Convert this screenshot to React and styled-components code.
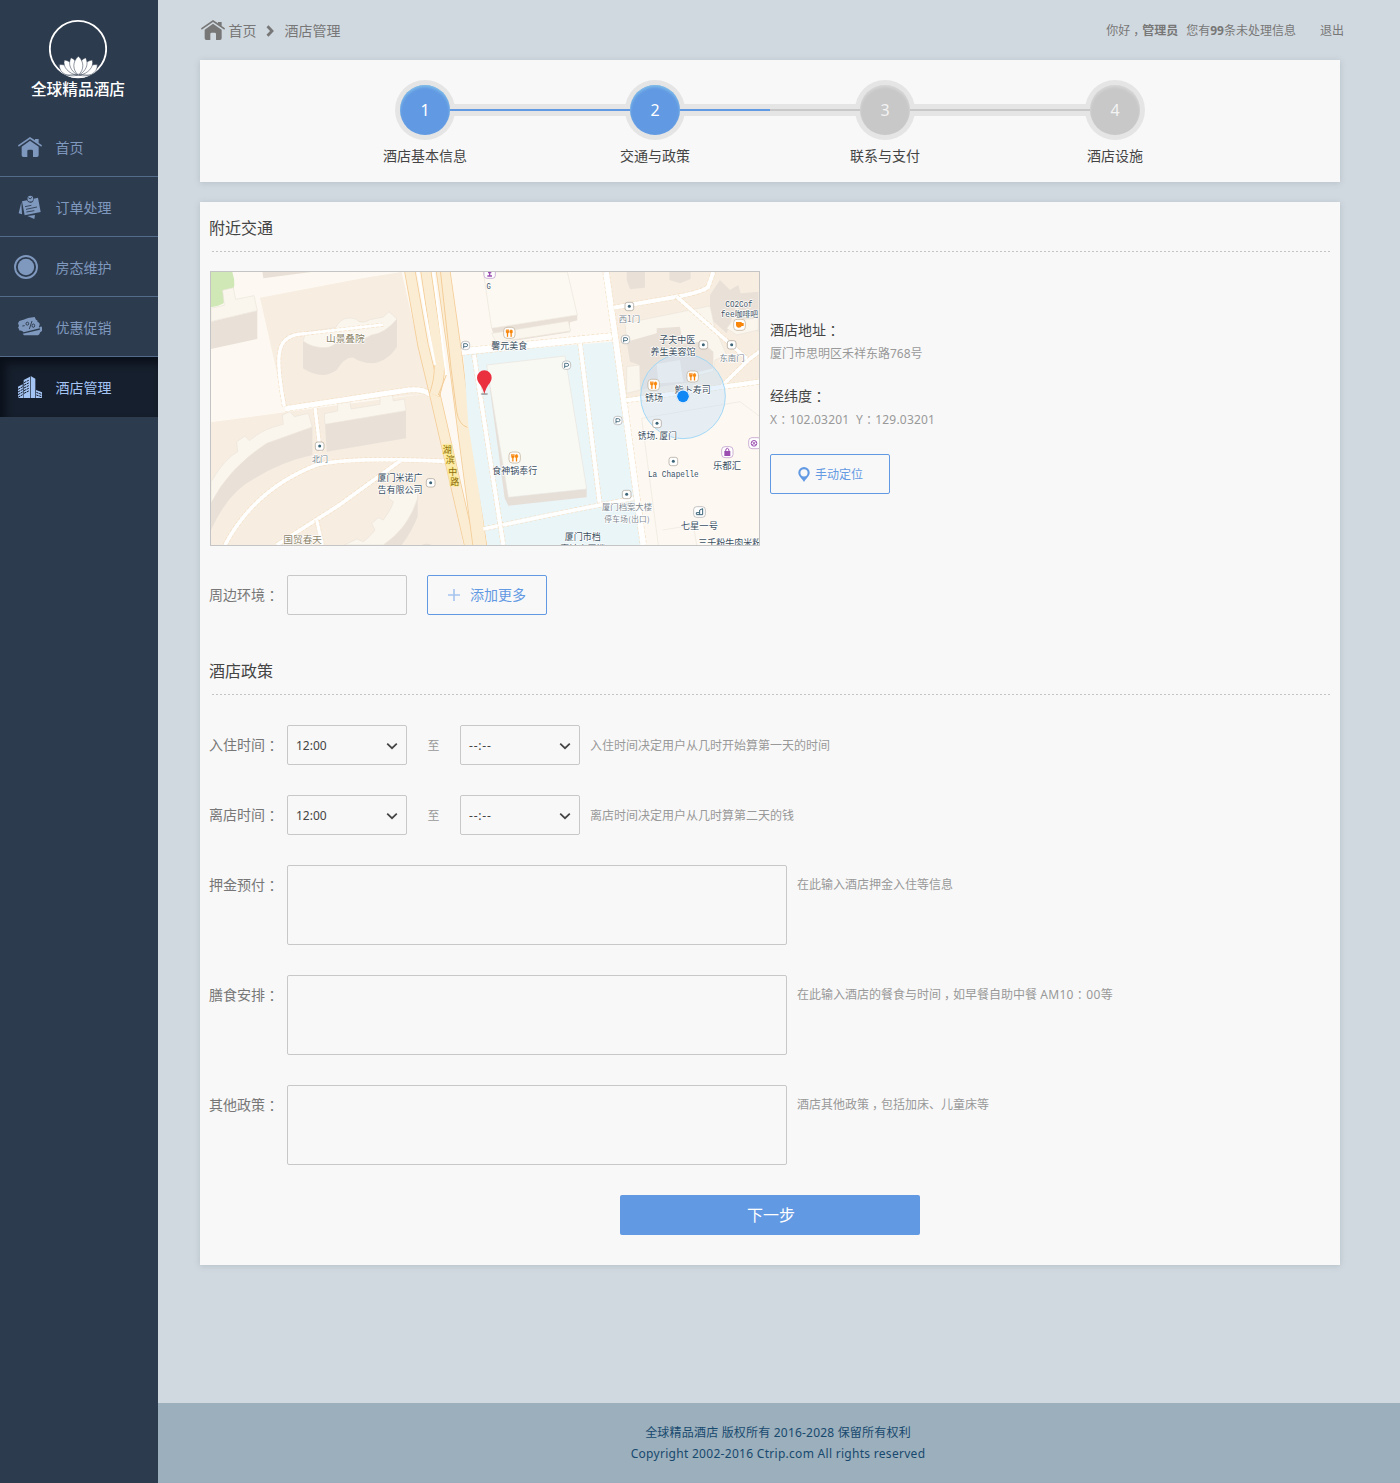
import React from "react";
import styled, { createGlobalStyle, css } from "styled-components";

const sans = '"Noto Sans", "Noto Sans CJK SC", sans-serif';
const blue = "#6299e3";

const GlobalStyle = createGlobalStyle`
  * { box-sizing: border-box; }
  body { margin: 0; background: #d1d9e0; font-family: ${sans}; font-size: 14px; color: #777; }
  input, textarea, button { font: inherit; margin: 0; outline: none; }
`;

/* ---------- page frame ---------- */
const Page = styled.div`
  display: flex;
  min-height: 1483px;
`;
const Sidebar = styled.aside`
  width: 158px;
  flex: none;
  background: #2d3b4e;
`;
const Main = styled.div`
  flex: 1;
  min-width: 0;
  display: flex;
  flex-direction: column;
`;
const Content = styled.main`
  flex: 1;
  padding: 0 60px 0 42px;
`;

/* ---------- sidebar ---------- */
const Brand = styled.div`
  height: 117px;
  padding-top: 19px;
  display: flex;
  flex-direction: column;
  align-items: center;
  svg { display: block; margin-right: 2px; }
`;
const BrandName = styled.div`
  margin: -1px 2px 0 0;
  color: #fff;
  font-size: 15.7px;
  font-weight: 500;
  line-height: 22px;
  white-space: nowrap;
`;
const NavItem = styled.a`
  display: flex;
  align-items: center;
  height: 60px;
  padding-left: ${(p) => p.$inset || 18}px;
  border-bottom: 1px solid #536c8c;
  color: #7f98bd;
  line-height: 20px;
  svg { flex: none; display: block; }
  span { margin: 2px 0 0 ${(p) => 31.5 - (p.$inset || 18)}px; }
  ${(p) =>
    p.$active &&
    css`
      border-bottom: 0;
      background: #161f2d;
      color: #a4c4f3;
      box-shadow: inset 5px 6px 9px rgba(4, 8, 14, 0.65);
    `}
`;
const IconSlot = styled.i`
  display: flex;
  width: 24px;
  justify-content: center;
`;

/* ---------- top bar ---------- */
const TopBar = styled.header`
  display: flex;
  justify-content: space-between;
  height: 60px;
  margin-right: -4px;
  line-height: 22px;
  color: #777;
`;
const Crumbs = styled.nav`
  display: flex;
  align-items: center;
  padding-left: 1px;
  svg { display: block; }
  > svg { margin-bottom: 2px; }
`;
const Crumb = styled.span`
  margin: 1px 0 0 ${(p) => p.$gap}px;
`;
const Account = styled.div`
  display: flex;
  align-items: center;
  font-size: 12px;
  padding-top: 1px;
  span + span { margin-left: ${(p) => p.$gap}px; }
`;
const Exit = styled.a`
  margin-left: 24px;
`;
const Mark = styled.i`
  font-style: normal;
  font-family: "Noto Sans CJK TC", sans-serif;
  line-height: 0;
  vertical-align: -1px;
`;
const Comma = styled.i`
  font-style: normal;
  font-feature-settings: "halt";
  padding: 0 0.25em;
`;

/* ---------- cards ---------- */
const Card = styled.section`
  background: #f8f8f8;
  box-shadow: 0 1px 6px rgba(90, 115, 115, 0.24);
`;
const StepsCard = styled(Card)`
  height: 122px;
  padding-top: 25px;
  display: flex;
  justify-content: center;
`;
const Step = styled.div`
  width: 230px;
  display: flex;
  flex-direction: column;
  align-items: center;
`;
const StepTrack = styled.div`
  display: flex;
  align-items: center;
`;
const Rail = styled.span`
  position: relative;
  z-index: 1;
  width: 90px;
  height: 12px;
  padding: 5px 0;
  background: ${(p) => (p.$hidden ? "transparent" : "#e5e5e5")};
  &::before {
    content: "";
    display: block;
    height: 2px;
    background: ${(p) => (p.$hidden ? "transparent" : p.$done ? blue : "#c8c8c8")};
  }
`;
const StepDot = styled.span`
  width: 50px;
  height: 50px;
  border-radius: 50%;
  background: ${(p) => (p.$done ? blue : "#c8c8c8")};
  box-shadow: 0 0 0 5px #e5e5e5, inset 0 2px 3px ${(p) => (p.$done ? "rgba(140, 205, 235, .7)" : "rgba(225, 225, 225, .6)")};
  color: ${(p) => (p.$done ? "#fff" : "#f3f3f3")};
  font-size: 16px;
  line-height: 50px;
  text-align: center;
`;
const StepLabel = styled.span`
  margin-top: 11px;
  line-height: 20px;
  color: #444;
`;
const FormCard = styled(Card)`
  margin-top: 20px;
  height: 1063px;
  padding: 0 10px 0 9px;
`;
const SectionTitle = styled.h2`
  margin: ${(p) => p.$top || 0}px 0 0;
  height: 50px;
  padding-top: 14px;
  font-size: 16px;
  font-weight: 400;
  line-height: 24px;
  color: #444;
  background: repeating-linear-gradient(90deg, #c4c4c4 0 2px, transparent 2px 4px) 3px 100% / 100% 1px no-repeat;
`;

/* ---------- location ---------- */
const Location = styled.div`
  display: flex;
  margin: 19px 0 -1px 1px;
`;
const MapFrame = styled.div`
  width: 550px;
  height: 275px;
  border: 1px solid #c4c4c4;
  svg { display: block; }
`;
const LocationInfo = styled.div`
  margin-left: 10px;
  padding-top: 48px;
`;
const InfoTitle = styled.div`
  height: 22px;
  line-height: 22px;
  color: #444;
`;
const InfoText = styled.div`
  margin: 2px 0 ${(p) => p.$bottom}px;
  height: 22px;
  font-size: 12px;
  line-height: 22px;
  color: #999;
  white-space: pre;
  letter-spacing: ${(p) => p.$tracking || 0}px;
`;
const OutlineButton = styled.button`
  display: flex;
  align-items: center;
  width: 120px;
  height: 40px;
  padding: 0 0 0 ${(p) => p.$pad}px;
  border: 1px solid ${blue};
  border-radius: 2px;
  background: transparent;
  color: ${blue};
  font-size: ${(p) => p.$size}px;
  span { margin-left: ${(p) => p.$gap}px; }
`;

/* ---------- form ---------- */
const Row = styled.div`
  display: flex;
  margin-top: 30px;
  line-height: 40px;
`;
const Label = styled.label`
  width: 78px;
  height: 40px;
  flex: none;
`;
const field = css`
  border: 1px solid #c8c8c8;
  border-radius: 2px;
  background: transparent;
`;
const TextInput = styled.input`
  ${field}
  width: 120px;
  height: 40px;
  margin-right: 20px;
`;
const TextArea = styled.textarea`
  ${field}
  display: block;
  width: 500px;
  height: 80px;
  resize: none;
`;
const Select = styled.div`
  ${field}
  display: flex;
  justify-content: space-between;
  align-items: center;
  width: 120px;
  height: 40px;
  padding: 2px 8px 0;
  font-size: 12px;
  letter-spacing: ${(p) => (p.$empty ? 0.8 : 0)}px;
  color: #444;
`;
const To = styled.span`
  width: 53px;
  height: 40px;
  padding-top: 1px;
  text-align: center;
  font-size: 12px;
  color: #999;
`;
const Hint = styled.span`
  margin-left: 10px;
  height: 40px;
  padding-top: ${(p) => p.$drop || 0}px;
  font-size: 12px;
  color: #999;
`;
const Latin = styled.span`
  letter-spacing: 0.35px;
`;
const Submit = styled.button`
  display: block;
  width: 300px;
  height: 40px;
  margin: 30px auto 0 411px;
  padding: 0 0 2px 2px;
  border: 0;
  border-radius: 2px;
  background: ${blue};
  color: #fff;
  font-size: 16px;
`;
const Footer = styled.footer`
  height: 80px;
  padding: 19px 2px 0 0;
  background: #9bafbc;
  color: #17496e;
  font-size: 12px;
  line-height: 21px;
  text-align: center;
`;
const FooterLine = styled.div`
  letter-spacing: ${(p) => p.$tracking}px;
`;

/* ---------- icons ---------- */
const HomeIcon = ({ color }) => (
  <svg width="24" height="21" viewBox="0 -3 72 63" fill={color}>
    <path d="M0 25 36 0 51 10V6H62V18L72 25 70 29 36 6 2 29Z" />
    <path d="M11 29 36 11 62 29V55Q62 60 57 60H45V42Q45 38 41 38H32Q28 38 28 42V60H16Q11 60 11 55Z" />
  </svg>
);
const OrderIcon = () => (
  <svg width="24" height="24" viewBox="0 0 72 72">
    <g fill="#7f98bd">
      <path d="M10 22 2 55 12 58Z" />
      <path d="M12 19 27 16Q30 24 38 23 47 22 47 11L60 8 68 51 20 61Z" />
      <path d="M28 63 51 60 49 72Z" />
      <circle cx="37" cy="11" r="8.500" />
    </g>
    <g fill="none" stroke="#2d3b4e" strokeWidth="2.600">
      <path d="M21 35 40 31M24 43 57 36M25 51 49 47" />
      <path d="M31 8Q36 16 42 7" />
    </g>
  </svg>
);
const RoomIcon = () => (
  <svg width="24" height="24" viewBox="0 0 24 24">
    <circle cx="12" cy="12" r="11" fill="none" stroke="#7f98bd" strokeWidth="1.9" />
    <circle cx="12" cy="12" r="8.2" fill="#7f98bd" />
  </svg>
);
const SaleIcon = () => (
  <svg width="24" height="19" viewBox="0 0 72 57">
    <path fill="#7f98bd" d="M4 12Q20 8 30 3L50 0 54 8Q61 10 58 15 66 16 65 24 60 29 65 34L17 46Q12 40 5 41L0 31Q5 28 2 24L0 19Z" />
    <path fill="#7f98bd" d="M14 50 66 38 64 30Q72 26 72 32V42Q65 44 64 52L60 55H18Z" />
    <g fill="none" stroke="#2d3b4e" strokeWidth="2.800">
      <path d="M13 27 20 26M42 12 34 36" />
      <ellipse cx="28" cy="20" rx="4" ry="4.500" />
      <ellipse cx="46" cy="26" rx="4" ry="5" />
    </g>
  </svg>
);
const HotelIcon = () => (
  <svg width="24" height="22" viewBox="0 0 72 66">
    <g fill="#a4c4f3">
      <path d="M0 32 14 25 16 66H0Z" />
      <path d="M17 12 36 2V66H17Z" />
      <path d="M38 0 52 8V66H38Z" />
      <path d="M54 42 72 49V66H54Z" />
    </g>
    <path
      d="M0 40 14 32M0 48 14 40M0 56 14 48M0 64 14 56M18 20 34 12M18 28 34 20M18 36 34 28M18 44 34 36M18 52 34 44M55 49 70 55M55 57 70 62"
      stroke="#161f2d"
      strokeWidth="3"
      strokeDasharray="7 2"
    />
  </svg>
);
const Logo = () => (
  <svg width="58" height="60" viewBox="0 0 174 180">
    <path fill="#fff" d="M28 136 50 166H124L146 136Q130 178 87 178 44 178 28 136Z" />
    <circle cx="87" cy="90" r="84.5" fill="none" stroke="#fff" strokeWidth="5.5" />
    <g fill="#fff" stroke="#2d3b4e" strokeWidth="1.6">
      <path d="M84 169C60 174 30 166 31 137 52 134 72 150 84 169ZM92 169C116 174 146 166 145 137 124 134 104 150 92 169Z" />
      <path d="M85 169C60 164 40 145 46 123 66 126 82 142 85 169ZM91 169C116 164 136 145 130 123 110 126 94 142 91 169Z" />
      <path d="M87 169C64 156 56 134 66 116 82 122 92 142 87 169ZM89 169C112 156 120 134 110 116 94 122 84 142 89 169Z" />
      <path d="M88 169C70 152 70 128 88 112 106 128 106 152 88 169Z" />
    </g>
    <path d="M34 170Q87 161 140 170" fill="none" stroke="#2d3b4e" strokeWidth="1.3" />
  </svg>
);
const CrumbArrow = () => (
  <svg width="8" height="12" viewBox="0 0 8 12">
    <path d="M1.5 1.2 6 6 1.5 10.8" fill="none" stroke="#777" strokeWidth="2.8" />
  </svg>
);
const Caret = () => (
  <svg width="12" height="8" viewBox="0 0 12 8">
    <path d="M1.2 1.600 6 6.200 10.8 1.600" fill="none" stroke="#444" strokeWidth="1.7" />
  </svg>
);
const PinIcon = () => (
  <svg width="12" height="15" viewBox="0 0 12 15">
    <path
      fillRule="evenodd"
      fill={blue}
      d="M6 0a5.7 5.7 0 0 1 5.7 5.8C11.7 8.700 8.500 11.200 6 15 3.500 11.200.3 8.700.3 5.800A5.700 5.700 0 0 1 6 0Zm0 2.200a3.600 3.600 0 1 0 0 7.200 3.600 3.600 0 0 0 0-7.200Z"
    />
  </svg>
);
const PlusIcon = () => (
  <svg width="12" height="12" viewBox="0 0 12 12">
    <path d="M6 0V12M0 6H12" stroke="#a5c4ee" strokeWidth="1.6" />
  </svg>
);

/* ---------- map ---------- */
const MapText = styled.text`
  font-family: ${(p) => (p.$mono ? '"Liberation Mono", "Noto Sans CJK SC", monospace' : '"Noto Sans CJK SC", sans-serif')};
  font-size: ${(p) => p.$size || 27}px;
  fill: ${(p) => p.$color || "#3b4f61"};
  stroke: ${(p) => p.$halo || "#fff"};
  stroke-width: 4px;
  stroke-linejoin: round;
  paint-order: stroke;
  text-anchor: middle;
`;
const PoiBox = ({ x, y, color = "#a39a90", children }) => (
  <g transform={`translate(${x} ${y})`}>
    <rect x="-13" y="-12" width="26" height="25" rx="7" fill="#fff" stroke={color} strokeWidth="2" />
    {children}
  </g>
);
const DotPoi = (p) => (
  <PoiBox {...p}>
    <circle r="4.5" fill="#3b6478" />
  </PoiBox>
);
const ParkPoi = ({ x, y }) => (
  <g transform={`translate(${x} ${y})`}>
    <rect x="-12" y="-13" width="25" height="25" rx="9" fill="#fff" stroke="#a8a8a8" strokeWidth="2" />
    <path d="M-5 8V-6H2Q7-6 7-1.500 7 3 2 3H-5" fill="none" stroke="#3b6478" strokeWidth="2.600" />
  </g>
);
const FoodPoi = ({ x, y }) => (
  <g transform={`translate(${x} ${y})`}>
    <rect x="-17" y="-17" width="34" height="33" rx="10" fill="#fff" stroke="#b9a78e" strokeWidth="2" />
    <path d="M-10-10H-8V-5H-6.500V-10H-4.500V-5H-3V-10H-1V-3Q-1 0-4 1V11H-7V1Q-10 0-10-3Z" fill="#f8860a" stroke="#f8860a" />
    <path d="M7 11H4V1Q1 0 1-4 1-9 5-10 10-10 10-4 10 0 7 1Z" fill="#f8860a" stroke="#f8860a" />
  </g>
);
const whiteRoads = [
  ["M240 431 590 378Q650 367 675 388", 15],
  ["M238 425Q215 300 224 260 232 208 300 206", 10],
  ["M535 179 300 206", 8],
  ["M330 428 346 560", 10],
  ["M60 840Q150 670 340 598 450 575 722 589", 11],
  ["M215 840 400 722 585 588", 11],
  ["M335 765 352 840", 10],
];
const eastRoads = [
  ["M-55 260 160 238 405 213", 20],
  ["M378 21 405 210 490 840", 17],
  ["M300 235 360 722", 12],
  ["M10 792 200 752 460 700", 11],
  ["M-18 270 70 840", 12],
  ["M400 128 590 95Q665 82 684 66 690 50 700 21", 12],
  ["M590 95 805 285 725 363", 11],
  ["M805 285 845 255", 11],
  ["M438 406 840 350", 13],
];
const Roads = ({ list }) =>
  list.map(([d, w]) => (
    <g key={d} fill="none">
      <path d={d} stroke="#f3dfc3" strokeWidth={w + 4} strokeDasharray="9 5" />
      <path d={d} stroke="#fff" strokeWidth={w} />
    </g>
  ));
const Highway = ({ d, w }) => (
  <g fill="none">
    <path d={d} stroke="#f4cd98" strokeWidth={w} />
    <path d={d} stroke="#fbedd3" strokeWidth={w - 5} />
  </g>
);
const side = "#e9e1d8";
const roof = { fill: "#faf6ee", stroke: "#ebe4da", strokeWidth: 2 };

const CityMap = () => (
  <svg width="548" height="273" viewBox="18 21 1644 819">
    <path d="M18 21H1662V840H18Z" fill="#fdf9f2" />
    <path d="M18 21H82Q96 62 78 92 58 122 18 127Z" fill="#cfe8b6" />
    <path d="M165 98 480 38 590 21 672 385 240 430ZM18 472 240 442 672 385 722 590 775 840H18Z" fill="#f7ede1" />
    <path d="M172 21H320L175 40Z" fill={side} />
    <path d="M18 170 157 137V222L18 252Z" fill={side} />
    <path d="M18 130 58 121 53 76 85 68 92 103 147 92 157 137 18 170Z" {...roof} />
    <path d="M294 228Q320 248 360 248 385 248 405 222 450 240 500 210 540 205 576 162V245Q545 292 500 295 465 292 445 278 420 275 395 315 370 332 350 330 320 328 294 310Z" fill={side} />
    <path d="M303 200 392 188Q405 163 425 160 450 156 462 170 480 175 495 164L535 156 552 140 576 162Q540 205 500 210 450 240 405 222 385 248 360 248 320 248 294 228Z" {...roof} />
    <path d="M360 478 603 437V520L365 560Z" fill={side} />
    <path d="M360 478 358 446 398 438 398 415 435 410 438 432 525 418V395L562 390 565 408 598 402 603 437Z" {...roof} />
    <path d="M18 715Q70 610 185 535L322 486V570Q230 590 150 640 70 680 18 795Z" fill={side} />
    <path d="M18 650Q60 580 98 560L95 530 120 513 133 527Q175 490 235 478L232 450 255 440 268 455 310 445 322 486 185 535Q70 610 18 715Z" {...roof} />
    <path d="M535 840Q615 785 638 690V755Q620 800 590 840Z" fill={side} />
    <path d="M418 840 455 822 475 830Q500 810 510 795L500 775 520 758 535 765Q560 730 565 710L550 700 560 670H638V700Q610 790 535 840Z" {...roof} />
    <path d="M650 840Q665 832 680 840Z" fill={side} />
    <Roads list={whiteRoads} />
    <Highway d="M614 15 654 240 690 390 795 845" w={34} />
    <Highway d="M662 15 700 270Q710 330 688 390" w={33} />
    <Highway d="M714 15 750 270 778 490 825 845" w={44} />
    <path d="M638 15 690 300M684 15 724 330" fill="none" stroke="#fff" strokeWidth="6" />
    <path d="M706 15 738 310 755 440Q762 480 787 487M724 330 700 390" fill="none" stroke="#f4cd98" strokeWidth="3" />

    <g transform="translate(825 0)">
      <path d="M388 21H840V350L435 405Z" fill="#f7ede1" />
      <path d="M-50 267 400 230 412 330 482 840H22L-35 480Z" fill="#eaf5f8" />
      <path d="M35 190 292 150V166L270 172V202L48 236Z" fill={side} />
      <path d="M10 21H262L292 150 35 190Z" fill="#fcf9f3" stroke="#ebe4da" strokeWidth="2" />
      <path d="M35 205 265 168 272 198 48 232Z" {...roof} />
      <path d="M20 300 85 697 320 672V697L85 722 74 700Z" fill="#e6dfd8" />
      <path d="M20 300 255 273 320 672 85 697Z" fill="#f9f9f4" stroke="#e8e4dc" strokeWidth="2" />
      <path d="M440 21H495V68L450 73 440 45ZM568 21H632V42L600 55 568 45Z" fill={side} />
      <path d="M690 90 720 45 750 75 775 60 782 85 835 80V200L790 175 770 120 740 205 690 160Z" fill={side} />
      <path d="M435 175 690 123 705 190 740 270 705 285 700 320 440 385V305L478 300 470 240 440 230Z" {...roof} />
      <path d="M440 230 530 205V190L600 185 608 235 665 230 700 260V310L640 325 640 350 480 375 478 300 450 290Z" fill={side} />
      <path d="M530 297 600 285 610 350 535 355Z" fill="#f8f2ea" />
      <path d="M740 190 760 165 835 160V195L770 210Z" {...roof} />
      <path d="M485 460 780 410 840 455M485 460 535 840M548 795 640 780 650 840" fill="none" stroke="#ece6dc" strokeWidth="2" />
      <Roads list={eastRoads} />
      <circle cx="609" cy="394" r="127" fill="#c6e0f8" fillOpacity=".42" stroke="#a3d8f6" strokeWidth="3" />
    </g>

    <path d="M711 538 741 535 765 662 736 664Z" fill="#fbe9a0" opacity=".7" />
    {[["湖", 727, 563], ["滨", 736, 595], ["中", 743, 629], ["路", 749, 661]].map(([t, x, y]) => (
      <MapText key={t} x={x} y={y} $color="#8c6d12" $halo="#fbe98a">{t}</MapText>
    ))}
    <MapText x="421" y="232" $size={29} $color="#8d8468">山景叠院</MapText>
    <MapText x="293" y="834" $size={29} $color="#8d8468">国贸春天</MapText>
    <DotPoi x={344} y={543} />
    <MapText x="345" y="592" $size={24} $color="#70808c">北门</MapText>
    <MapText x="585" y="648">厦门米诺广</MapText>
    <MapText x="585" y="683">告有限公司</MapText>
    <DotPoi x={677} y={653} />
    <ParkPoi x={781} y={242} />

    <g transform="translate(825 0)">
      <rect x="12" y="8" width="34" height="32" rx="9" fill="#fff" stroke="#b58cc4" strokeWidth="2" />
      <path d="M22 33H36M29 33V24M24 23H34" stroke="#9b4eb0" strokeWidth="4" />
      <MapText x="26" y="71" $mono $size={26} textLength="13" lengthAdjust="spacingAndGlyphs">G</MapText>
      <FoodPoi x={88} y={204} />
      <MapText x="88" y="252">馨元美食</MapText>
      <ParkPoi x={259} y={301} />
      <ParkPoi x={436} y={224} />
      <ParkPoi x={413} y={467} />
      <FoodPoi x={104} y={578} />
      <MapText x="104" y="626">食神锅奉行</MapText>
      <DotPoi x={448} y={124} />
      <MapText x="448" y="172" $size={25} $color="#7d8790">西1门</MapText>
      <DotPoi x={670} y={239} />
      <MapText x="592" y="235">子夫中医</MapText>
      <MapText x="579" y="269">养生美容馆</MapText>
      <DotPoi x={755} y={239} />
      <MapText x="756" y="287" $size={25} $color="#7d8790">东南门</MapText>
      <MapText x="777" y="126" $mono $size={27} textLength="82" lengthAdjust="spacingAndGlyphs">CO2Cof</MapText>
      <MapText x="778" y="156" $mono $size={25} textLength="112" lengthAdjust="spacingAndGlyphs">fee咖啡吧</MapText>
      <rect x="761" y="163" width="35" height="33" rx="10" fill="#fff" stroke="#b9a78e" strokeWidth="2" />
      <path d="M768 171H785V174H791V183H785Q783 188 777 188 768 187 768 179Z" fill="#f8860a" />
      <FoodPoi x={521} y={360} />
      <MapText x="522" y="408">锈场</MapText>
      <FoodPoi x={638} y={335} />
      <MapText x="638" y="383">鮨卜寿司</MapText>
      <DotPoi x={531} y={475} />
      <MapText x="532" y="523" $size={26}>锈场. 厦门</MapText>
      <rect x="725" y="545" width="34" height="33" rx="10" fill="#fff" stroke="#b58cc4" strokeWidth="2" />
      <path d="M733 558H751V573H733Z" fill="#9b4eb0" />
      <path d="M737 558Q737 550 742 550T747 558" fill="none" stroke="#9b4eb0" strokeWidth="3" />
      <MapText x="741" y="611" $size={28}>乐都汇</MapText>
      <rect x="806" y="518" width="38" height="33" rx="10" fill="#fff" stroke="#b58cc4" strokeWidth="2" />
      <circle cx="822" cy="535" r="8.500" fill="none" stroke="#9b4eb0" strokeWidth="3" />
      <path d="M817 530 827 540M827 530 817 540" stroke="#9b4eb0" strokeWidth="3" />
      <DotPoi x={580} y={589} />
      <MapText x="580" y="637" $mono $size={27} textLength="152" lengthAdjust="spacingAndGlyphs">La Chapelle</MapText>
      <DotPoi x={440} y={688} />
      <MapText x="441" y="735" $size={25} $color="#7d8790">厦门档案大楼</MapText>
      <MapText x="441" y="771" $size={23} $color="#7d8790" textLength="136">停车场(出口)</MapText>
      <rect x="641" y="725" width="35" height="32" rx="9" fill="#fff" stroke="#a8a8a8" strokeWidth="2" />
      <path d="M649 749H668V731L659 735V749M649 748V743H659" fill="none" stroke="#3b6478" strokeWidth="3" />
      <MapText x="658" y="791" $size={28}>七星一号</MapText>
      <MapText x="308" y="825">厦门市档</MapText>
      <MapText x="308" y="860">案馆大厦楼</MapText>
      <MapText x="749" y="844">三千粉牛肉米粉</MapText>
      <circle cx="609" cy="394" r="20" fill="#fff" stroke="#c5dcef" strokeWidth="2" />
      <circle cx="609" cy="394" r="17.500" fill="#0f88f6" />
      <ellipse cx="13" cy="387" rx="11" ry="3" fill="#a9a9a9" />
      <path d="M13 387Q7 365-4 353-9 346-9 338A22 22 0 0 1 35 338Q35 346 30 353 19 365 13 387Z" fill="#ea2f3e" />
    </g>
  </svg>
);

/* ---------- data ---------- */
const steps = ["酒店基本信息", "交通与政策", "联系与支付", "酒店设施"];
const current = 1;
const nav = [
  { label: "首页", icon: <HomeIcon color="#7f98bd" /> },
  { label: "订单处理", icon: <OrderIcon /> },
  { label: "房态维护", icon: <RoomIcon />, inset: 14 },
  { label: "优惠促销", icon: <SaleIcon /> },
  { label: "酒店管理", icon: <HotelIcon />, active: true },
];
const times = [
  { label: "入住时间", hint: "入住时间决定用户从几时开始算第一天的时间" },
  { label: "离店时间", hint: "离店时间决定用户从几时算第二天的钱" },
];
const notes = [
  { label: "押金预付", hint: "在此输入酒店押金入住等信息" },
  {
    label: "膳食安排",
    hint: <>在此输入酒店的餐食与时间<Comma>，</Comma>如早餐自助中餐 <Latin>AM10<Mark>：</Mark>00</Latin>等</>,
  },
  { label: "其他政策", hint: <>酒店其他政策<Comma>，</Comma>包括加床、儿童床等</> },
];

export default function App() {
  return (
    <Page>
      <GlobalStyle />
      <Sidebar>
        <Brand>
          <Logo />
          <BrandName>全球精品酒店</BrandName>
        </Brand>
        {nav.map((n) => (
          <NavItem key={n.label} $active={n.active} $inset={n.inset}>
            <IconSlot>{n.icon}</IconSlot>
            <span>{n.label}</span>
          </NavItem>
        ))}
      </Sidebar>
      <Main>
        <Content>
          <TopBar>
            <Crumbs>
              <HomeIcon color="#777" />
              <Crumb $gap={3.5}>首页</Crumb>
              <Crumb $gap={9.5}><CrumbArrow /></Crumb>
              <Crumb $gap={10.5}>酒店管理</Crumb>
            </Crumbs>
            <Account $gap={8}>
              <span>你好<Comma>，</Comma><b>管理员</b></span>
              <span>您有<b>99</b>条未处理信息</span>
              <Exit>退出</Exit>
            </Account>
          </TopBar>
          <StepsCard>
            {steps.map((label, i) => (
              <Step key={label}>
                <StepTrack>
                  <Rail $hidden={i === 0} $done={i <= current} />
                  <StepDot $done={i <= current}>{i + 1}</StepDot>
                  <Rail $hidden={i === steps.length - 1} $done={i <= current} />
                </StepTrack>
                <StepLabel>{label}</StepLabel>
              </Step>
            ))}
          </StepsCard>
          <FormCard>
            <SectionTitle>附近交通</SectionTitle>
            <Location>
              <MapFrame><CityMap /></MapFrame>
              <LocationInfo>
                <InfoTitle>酒店地址<Mark>：</Mark></InfoTitle>
                <InfoText $bottom={20}>厦门市思明区禾祥东路768号</InfoText>
                <InfoTitle>经纬度<Mark>：</Mark></InfoTitle>
                <InfoText $bottom={23} $tracking={0.2}>X<Mark>：</Mark>102.03201{"  "}Y<Mark>：</Mark>129.03201</InfoText>
                <OutlineButton $pad={26.5} $gap={5.5} $size={12}><PinIcon /><span>手动定位</span></OutlineButton>
              </LocationInfo>
            </Location>
            <Row>
              <Label>周边环境<Mark>：</Mark></Label>
              <TextInput />
              <OutlineButton $pad={20} $gap={10} $size={14}><PlusIcon /><span>添加更多</span></OutlineButton>
            </Row>
            <SectionTitle $top={30}>酒店政策</SectionTitle>
            {times.map((t) => (
              <Row key={t.label}>
                <Label>{t.label}<Mark>：</Mark></Label>
                <Select>12:00<Caret /></Select>
                <To>至</To>
                <Select $empty>--:--<Caret /></Select>
                <Hint $drop={1}>{t.hint}</Hint>
              </Row>
            ))}
            {notes.map((n) => (
              <Row key={n.label}>
                <Label>{n.label}<Mark>：</Mark></Label>
                <TextArea />
                <Hint>{n.hint}</Hint>
              </Row>
            ))}
            <Submit>下一步</Submit>
          </FormCard>
        </Content>
        <Footer>
          <FooterLine $tracking={0.2}>全球精品酒店 版权所有 2016-2028 保留所有权利</FooterLine>
          <FooterLine $tracking={0.29}>Copyright 2002-2016 Ctrip.com All rights reserved</FooterLine>
        </Footer>
      </Main>
    </Page>
  );
}
